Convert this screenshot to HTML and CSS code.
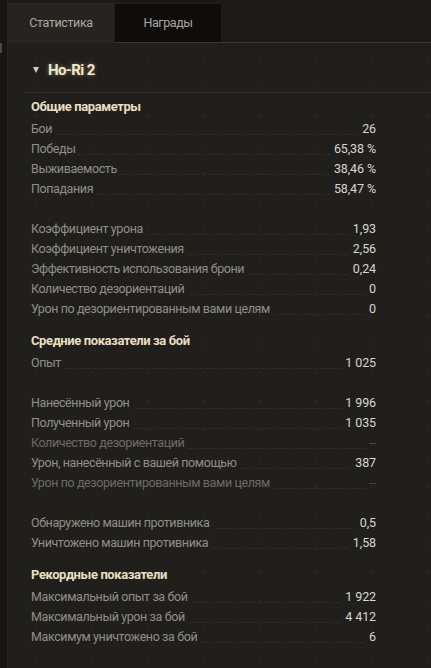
FILE: index.html
```html
<!DOCTYPE html>
<html lang="ru">
<head>
<meta charset="utf-8">
<title>Статистика</title>
<link rel="stylesheet" href="styles.css">
</head>
<body>
<div class="page">
  <div class="edge"><span class="tick"></span></div>
  <div class="main">
    <div class="tabs">
      <div class="tab active">Статистика</div>
      <div class="tab">Награды</div>
      <div class="tabs-rest"></div>
    </div>
    <div class="panel">
      <div class="title">
        <svg class="tri" width="6" height="6" viewBox="0 0 6 6"><polygon points="0,0 6,0 3,6" fill="#cfcfc8"/></svg>
        <span class="name">Ho-Ri 2</span>
      </div>
      <div class="stats">
        <div class="heading first">Общие параметры</div>
        <div class="row"><span class="lbl">Бои</span><span class="dots"></span><span class="val">26</span></div>
        <div class="row"><span class="lbl">Победы</span><span class="dots"></span><span class="val">65,38 %</span></div>
        <div class="row"><span class="lbl">Выживаемость</span><span class="dots"></span><span class="val">38,46 %</span></div>
        <div class="row"><span class="lbl">Попадания</span><span class="dots"></span><span class="val">58,47 %</span></div>
        <div class="spacer"></div>
        <div class="row"><span class="lbl">Коэффициент урона</span><span class="dots"></span><span class="val">1,93</span></div>
        <div class="row"><span class="lbl">Коэффициент уничтожения</span><span class="dots"></span><span class="val">2,56</span></div>
        <div class="row"><span class="lbl">Эффективность использования брони</span><span class="dots"></span><span class="val">0,24</span></div>
        <div class="row"><span class="lbl">Количество дезориентаций</span><span class="dots"></span><span class="val">0</span></div>
        <div class="row"><span class="lbl">Урон по дезориентированным вами целям</span><span class="dots"></span><span class="val">0</span></div>

        <div class="heading">Средние показатели за бой</div>
        <div class="row"><span class="lbl">Опыт</span><span class="dots"></span><span class="val">1 025</span></div>
        <div class="spacer"></div>
        <div class="row"><span class="lbl">Нанесённый урон</span><span class="dots"></span><span class="val">1 996</span></div>
        <div class="row"><span class="lbl">Полученный урон</span><span class="dots"></span><span class="val">1 035</span></div>
        <div class="row dim"><span class="lbl">Количество дезориентаций</span><span class="dots"></span><span class="val">--</span></div>
        <div class="row"><span class="lbl">Урон, нанесённый с вашей помощью</span><span class="dots"></span><span class="val">387</span></div>
        <div class="row dim"><span class="lbl">Урон по дезориентированным вами целям</span><span class="dots"></span><span class="val">--</span></div>
        <div class="spacer"></div>
        <div class="row"><span class="lbl">Обнаружено машин противника</span><span class="dots"></span><span class="val">0,5</span></div>
        <div class="row"><span class="lbl">Уничтожено машин противника</span><span class="dots"></span><span class="val">1,58</span></div>

        <div class="heading">Рекордные показатели</div>
        <div class="row"><span class="lbl">Максимальный опыт за бой</span><span class="dots"></span><span class="val">1 922</span></div>
        <div class="row"><span class="lbl">Максимальный урон за бой</span><span class="dots"></span><span class="val">4 412</span></div>
        <div class="row"><span class="lbl">Максимум уничтожено за бой</span><span class="dots"></span><span class="val">6</span></div>
      </div>
    </div>
  </div>
</div>
</body>
</html>
```

FILE: styles.css
```css
html, body {
  margin: 0;
  padding: 0;
  height: 100%;
}

body {
  background: #1b1a16;
  font-family: Roboto, "Liberation Sans", sans-serif;
  font-size: 12.5px;
  overflow: hidden;
}

.page {
  display: flex;
  height: 668px;
}

.edge {
  width: 7px;
  flex: none;
  background: #171612;
  border-right: 1px solid #26241f;
  position: relative;
}

.tick {
  position: absolute;
  left: 0;
  top: 43px;
  width: 2px;
  height: 10px;
  background: #4a4944;
}

.main {
  flex: 1;
  display: flex;
  flex-direction: column;
  background-color: #211f1b;
  background-image: radial-gradient(circle, rgba(40, 40, 90, 0.3) 0 1.5px, transparent 2px);
  background-size: 56px 28.5px;
  background-position: 0 -12px;
}

.tabs {
  display: flex;
  height: 43px;
  padding-top: 3px;
  box-sizing: border-box;
  background: #1b1a16;
}

.tab {
  width: 107px;
  box-sizing: border-box;
  display: flex;
  align-items: center;
  justify-content: center;
  color: #a9a9a1;
  font-size: 12.5px;
  letter-spacing: -0.4px;
  padding-bottom: 2px;
  background: #0e0d0b;
  border-top: 1px solid #201f1b;
  border-right: 1px solid #1e1d19;
  border-bottom: 1px solid #3a3833;
}

.tab.active {
  background: #262420;
  border-bottom: 1px solid #262420;
  border-top: 1px solid #2c2a25;
}

.tabs-rest {
  flex: 1;
  border-bottom: 1px solid #3a3833;
}

.panel {
  flex: 1;
}

.title {
  margin-left: 17px;
  padding: 17px 0 12px 8px;
  height: 20px;
  display: flex;
  align-items: center;
  gap: 9px;
  border-bottom: 1px solid #34322d;
}

.tri {
  display: block;
}

.name {
  color: #f1e9cc;
  font-weight: 700;
  font-size: 15px;
  letter-spacing: -0.6px;
  line-height: 20px;
  text-shadow: 0 0 4px rgba(240, 225, 170, 0.45);
}

.stats {
  padding: 0 55px 0 23px;
}

.heading {
  color: #e8dfc2;
  font-weight: 700;
  font-size: 13px;
  letter-spacing: -0.4px;
  line-height: 20px;
  margin-top: 12px;
  margin-bottom: 2px;
}

.heading.first {
  margin-top: 4px;
}

.row {
  display: flex;
  height: 20px;
  line-height: 20px;
}

.lbl {
  color: #8f8f88;
  white-space: nowrap;
  letter-spacing: -0.4px;
}

.dots {
  flex: 1;
  align-self: flex-end;
  height: 1px;
  margin: 0 3px 4px 4px;
  background-image: linear-gradient(to right, #3c3a35 1px, transparent 1px);
  background-size: 3px 1px;
  background-repeat: repeat-x;
}

.val {
  color: #d7d7cf;
  white-space: nowrap;
  letter-spacing: -0.1px;
}

.row.dim .lbl {
  color: #6c6c66;
}

.row.dim .val {
  color: #4d4c47;
}

.spacer {
  height: 20px;
}
```
